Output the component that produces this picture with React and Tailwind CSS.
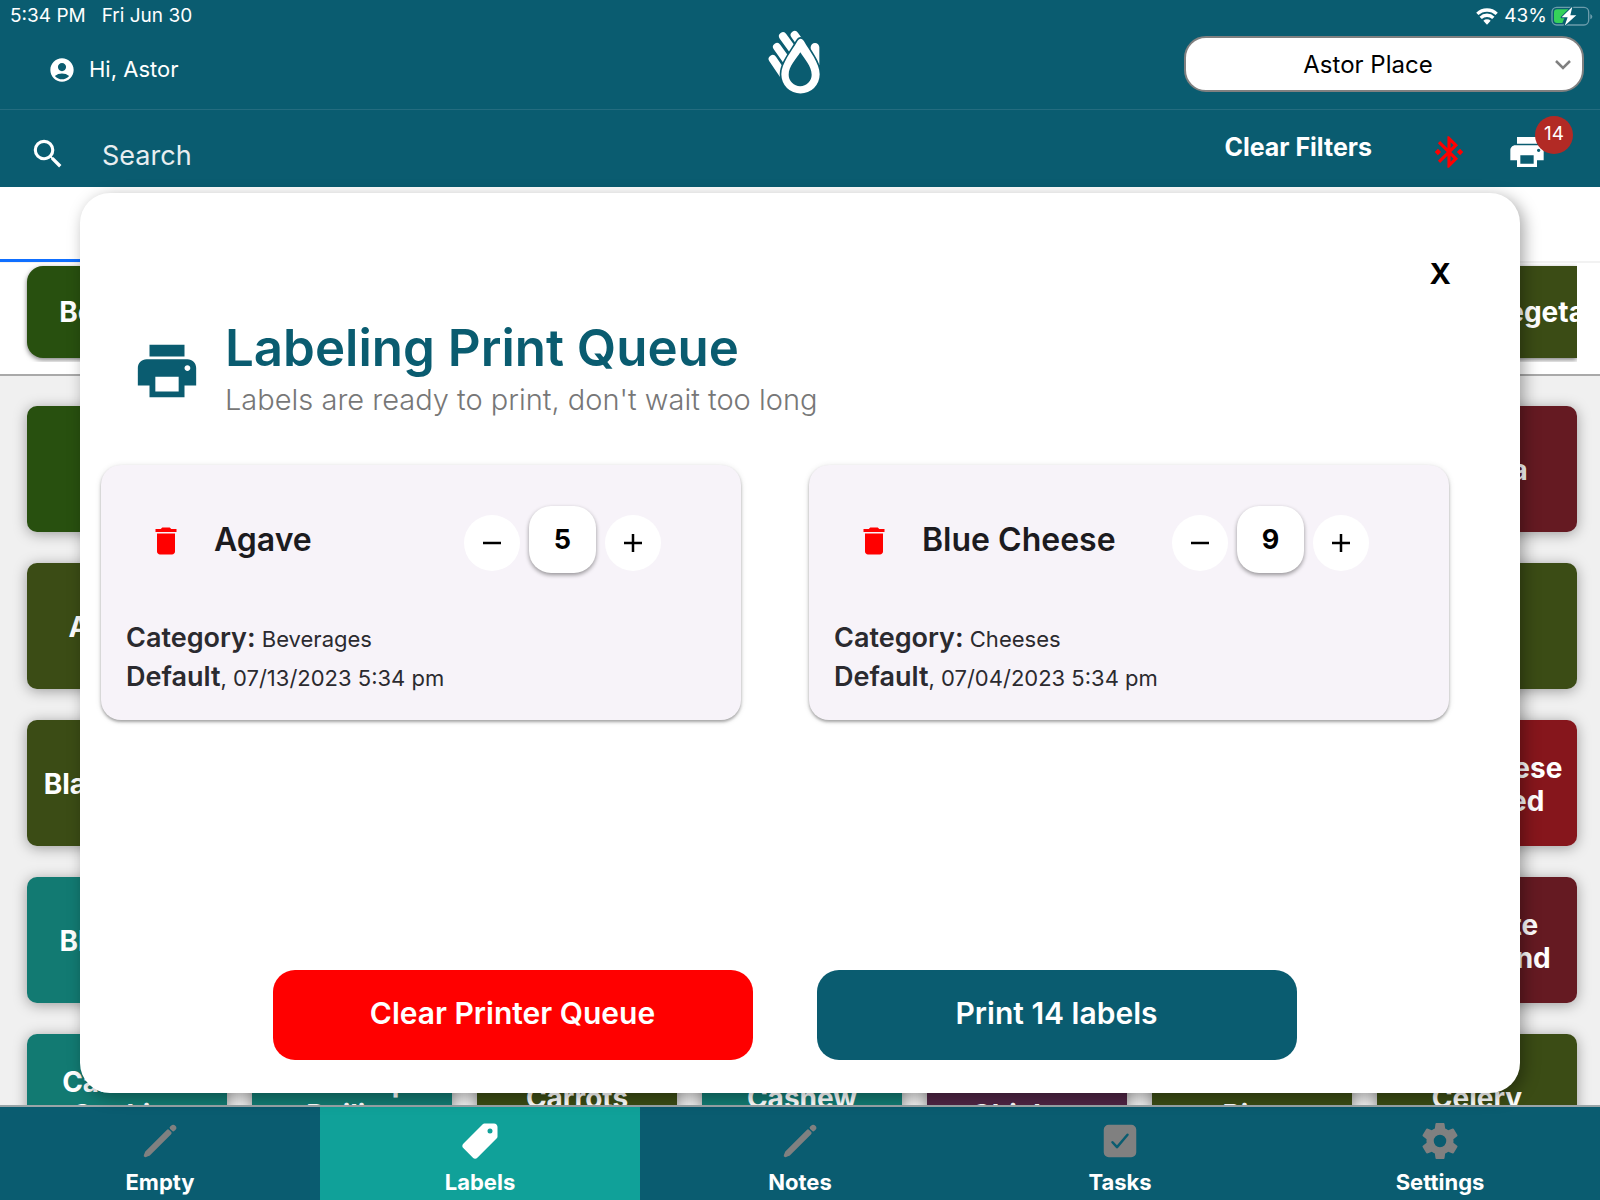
import React from 'react';
import { MdAccountCircle, MdSearch, MdPrint, MdDelete } from 'react-icons/md';
import { IoPencil, IoPricetag, IoCheckbox, IoSettingsSharp } from 'react-icons/io5';

const GREEN = 'bg-[#28500f]';
const OLIVE = 'bg-[#3b4c15]';
const TEAL = 'bg-[#127a72]';
const MAROON = 'bg-[#651a22]';
const RED = 'bg-[#86161c]';
const PURPLE = 'bg-[#4f2544]';

const tiles = [
  ['', GREEN], ['', OLIVE], ['', OLIVE], ['', OLIVE], ['', MAROON], ['', OLIVE], ['Burrata', MAROON],
  ['Apricots', OLIVE], ['', OLIVE], ['', OLIVE], ['', MAROON], ['', OLIVE], ['', OLIVE], ['', OLIVE],
  ['Black Beans', OLIVE], ['', TEAL], ['', TEAL], ['', RED], ['', OLIVE], ['', TEAL], ['Blue Cheese\nCrumbled', RED],
  ['Blueberry', TEAL], ['', OLIVE], ['', RED], ['', OLIVE], ['', TEAL], ['', RED], ['Baguette\nBeef Blend', MAROON],
  ['Caramels\nCookies', TEAL], ['Ketchup\nDailies', TEAL], ['Carrots', OLIVE], ['Cashew', TEAL], ['Canned\nChicken', PURPLE], ['Carrot\nRice', OLIVE], ['Celery', OLIVE],
];

const queue = [
  { name: 'Agave', count: 5, category: 'Beverages', date: '07/13/2023 5:34 pm' },
  { name: 'Blue Cheese', count: 9, category: 'Cheeses', date: '07/04/2023 5:34 pm' },
];

const navItems = [
  { label: 'Empty', Icon: IoPencil },
  { label: 'Labels', Icon: IoPricetag, active: true },
  { label: 'Notes', Icon: IoPencil },
  { label: 'Tasks', Icon: IoCheckbox },
  { label: 'Settings', Icon: IoSettingsSharp },
];

function HandDropLogo() {
  return (
    <svg viewBox="110 60 162 195" className="h-[65px] w-[54px]" aria-label="Logo" role="img">
      <g stroke="#fff" strokeWidth="24" strokeLinecap="round">
        <path d="M127 147L160 196" />
        <path d="M140 111L175 160" />
        <path d="M158 79L195 130" />
        <path d="M193 75L215 106" />
      </g>
      <path fill="#fff" d="M267 112a13 13 0 0 0-26 0c0 6-1 10-3 14l29 40z" />
      <path
        fill="#fff"
        stroke="#0a5c70"
        strokeWidth="10"
        paintOrder="stroke"
        d="M211 86c-4 0-7 3-10 8-16 28-48 66-48 99a57.500 57.500 0 0 0 115 0c0-33-31-71-47-99-3-5-6-8-10-8z"
      />
      <path fill="#0a5c70" d="M210 127c-12 19-35 42-35 67a34.500 34.500 0 0 0 69 0c0-25-22-48-34-67z" />
    </svg>
  );
}

function WifiIcon() {
  return (
    <svg viewBox="0 0 66 50" className="h-[17px] w-[22px]" fill="none" stroke="#fff" strokeWidth="10" aria-hidden="true">
      <path d="M4 17a42 42 0 0 1 58 0" />
      <path d="M14 29a27 27 0 0 1 38 0" />
      <path d="M33 50L22 38a16 16 0 0 1 22 0z" fill="#fff" stroke="none" />
    </svg>
  );
}

function BatteryIcon() {
  return (
    <svg viewBox="0 0 126 60" className="h-5 w-[42px]" aria-label="Battery charging" role="img">
      <rect x="3" y="4" width="110" height="53" rx="14" fill="none" stroke="#6c9cab" strokeWidth="4" />
      <path d="M118 24q6 3 6 8t-6 8z" fill="#6c9cab" />
      <path d="M18 10h34L34 51H18q-9 0-9-9V19q0-9 9-9z" fill="#35d15a" />
      <path
        d="M64 2L32 34h18l-9 25 35-31H58z"
        fill="#fff"
        stroke="#0a5c70"
        strokeWidth="6"
        strokeLinejoin="round"
        paintOrder="stroke"
      />
    </svg>
  );
}

function BluetoothIcon() {
  return (
    <svg viewBox="0 0 24 24" className="size-[38px]" fill="#f00" aria-hidden="true">
      <path d="M19,10L17,12L19,14L21,12M14.88,16.29L13,18.17V14.41M13,5.83L14.88,7.71L13,9.58M17.710,7.710L12,2H11V9.580L6.410,5L5,6.410L10.590,12L5,17.580L6.410,19L11,14.410V22H12L17.710,16.290L13.410,12M7,12L5,10L3,12L5,14L7,12Z" />
    </svg>
  );
}

function Header() {
  return (
    <header className="shrink-0 bg-[#0a5c70] text-white">
      <div className="grid h-[110px] grid-cols-3 border-b border-[#246c7f]">
        <div className="flex flex-col items-start">
          <div className="flex h-8 items-center gap-4 pl-[10px] text-[19px]">
            <span>5:34 PM</span>
            <span>Fri Jun 30</span>
          </div>
          <div className="flex h-[75px] items-center gap-[13px] pl-12 text-[22px]">
            <MdAccountCircle className="size-7" />
            <span>Hi, Astor</span>
          </div>
        </div>
        <div className="flex justify-center pt-[30px] pr-3">
          <HandDropLogo />
        </div>
        <div className="flex flex-col items-end">
          <div className="flex h-8 items-center pr-[7px] text-[19px]">
            <WifiIcon />
            <span className="mr-1 ml-[6px]">43%</span>
            <BatteryIcon />
          </div>
          <div className="relative mt-1 mr-4 w-[400px]">
            <select
              aria-label="Location"
              className="h-14 w-full appearance-none rounded-[22px] border-2 border-[#808080] bg-white pt-[2px] pr-9 pl-1 text-center text-[24px] text-black"
            >
              <option>Astor Place</option>
            </select>
            <svg
              viewBox="0 0 16 10"
              className="pointer-events-none absolute top-[24px] right-[13px] h-[10px] w-4"
              fill="none"
              stroke="#808080"
              strokeWidth="2.500"
              aria-hidden="true"
            >
              <path d="M1 1l7 7 7-7" />
            </svg>
          </div>
        </div>
      </div>
      <div className="flex h-[77px] items-center pr-[53px] pl-[29px]">
        <label htmlFor="search" className="mt-[10px] flex" aria-label="Search">
          <MdSearch className="size-[38px]" />
        </label>
        <input
          id="search"
          type="text"
          placeholder="Search"
          className="mt-[14px] ml-[35px] h-12 min-w-0 flex-1 bg-transparent text-[27px] outline-none placeholder:text-[#e8eef0]"
        />
        <button type="button" className="mb-[2px] text-[25px] font-bold">Clear Filters</button>
        <button type="button" aria-label="Bluetooth" className="mt-[6px] ml-[58px]">
          <BluetoothIcon />
        </button>
        <button type="button" aria-label="Print queue" className="relative mt-[6px] ml-[39px]">
          <MdPrint className="size-10" />
          <span className="absolute -top-4 left-[28px] flex size-[38px] items-center justify-center rounded-full bg-[#b22a25] text-[19px]">
            14
          </span>
        </button>
      </div>
    </header>
  );
}

function QueueCard({ name, count, category, date }) {
  return (
    <article className="flex h-[255px] flex-col justify-between rounded-[20px] bg-[#f7f3f9] pt-[41px] pr-20 pb-[23px] pl-[25px] shadow-[0_2px_3px_rgba(0,0,0,0.3),0_1px_6px_rgba(0,0,0,0.12)]">
      <div className="flex items-center">
        <button type="button" aria-label={`Remove ${name}`} className="mt-[2px] ml-[22px] text-[#f00]">
          <MdDelete className="size-9" />
        </button>
        <h2 className="ml-[30px] flex-1 text-[32px] font-semibold text-[#1c1b1f]">{name}</h2>
        <div className="flex items-center gap-[9px]">
          <button type="button" aria-label={`Fewer ${name}`} className="mt-[7px] flex size-14 items-center justify-center rounded-full bg-white">
            <svg viewBox="0 0 18 18" className="size-[18px]" stroke="#000" strokeWidth="2.500" aria-hidden="true">
              <path d="M0 9h18" />
            </svg>
          </button>
          <output className="flex size-[67px] items-center justify-center rounded-[22px] bg-white pt-[2px] text-[27px] font-bold text-black shadow-[0_2px_4px_rgba(0,0,0,0.4)]">
            {count}
          </output>
          <button type="button" aria-label={`More ${name}`} className="mt-[7px] flex size-14 items-center justify-center rounded-full bg-white">
            <svg viewBox="0 0 18 18" className="size-[18px]" stroke="#000" strokeWidth="2.500" aria-hidden="true">
              <path d="M0 9h18M9 0v18" />
            </svg>
          </button>
        </div>
      </div>
      <div className="text-[22px] leading-[37px] text-[#2b2a2f]">
        <p>
          <span className="text-[27px] font-semibold">Category:</span> {category}
        </p>
        <p>
          <span className="text-[27px] font-semibold">Default</span>, {date}
        </p>
      </div>
    </article>
  );
}

function PrintQueueDialog() {
  return (
    <section
      role="dialog"
      aria-labelledby="queue-title"
      className="absolute inset-x-[5%] top-[6px] bottom-3 flex flex-col rounded-[30px] bg-white pr-[71px] pb-[33px] pl-[21px] shadow-[4px_4px_16px_rgba(0,0,0,0.35)]"
    >
      <button type="button" aria-label="Close" className="mt-[61px] mr-[-2px] self-end text-[29px] leading-10 font-bold text-black">
        X
      </button>
      <div className="mt-6 flex items-center gap-[23px] pl-[31px] text-[#0a5c70]">
        <MdPrint className="mt-1 size-[70px]" />
        <div>
          <h1 id="queue-title" className="text-[51px] leading-[59px] font-semibold">Labeling Print Queue</h1>
          <p className="pt-[2px] text-[29px] leading-[41px] font-[350] text-[#777]">Labels are ready to print, don't wait too long</p>
        </div>
      </div>
      <div className="mt-[45px] grid grid-cols-2 gap-[68px]">
        {queue.map((item) => (
          <QueueCard key={item.name} {...item} />
        ))}
      </div>
      <div className="mt-auto flex justify-center gap-16 pl-[19px] text-[30px] font-semibold text-white">
        <button type="button" className="h-[90px] w-[480px] rounded-[22px] bg-[#f00] pb-1">Clear Printer Queue</button>
        <button type="button" className="h-[90px] w-[480px] rounded-[22px] bg-[#0a5c70] pb-1">Print 14 labels</button>
      </div>
    </section>
  );
}

function Background() {
  return (
    <div className="flex h-full flex-col text-[28px] font-bold text-white">
      <div className="h-[76px] shrink-0 border-b-2 border-[#f2f2f2]">
        <div className="h-[75px] w-1/5 border-b-3 border-[#0f6fff]" />
      </div>
      <div className="h-[113px] shrink-0 border-b-2 border-[#a9a9a9] pr-[23px]">
        <div className="flex justify-between overflow-hidden pt-[3px] pb-1 pl-[27px]">
          <div className="flex h-[92px] w-[200px] shrink-0 items-center justify-center rounded-[16px] bg-[#28500f] pr-[6px] shadow-[0_2px_5px_rgba(0,0,0,0.5)]">Beverage</div>
          <div className="flex h-[92px] w-[131px] shrink-0 items-center overflow-hidden rounded-l-[16px] bg-[#3b4c15] pl-[42px] shadow-[0_2px_5px_rgba(0,0,0,0.5)]">Vegetables</div>
        </div>
      </div>
      <div className="grid min-h-0 flex-1 auto-rows-[126px] grid-cols-7 gap-x-[25px] gap-y-[31px] overflow-hidden bg-[#f0f0f0] pt-[30px] pr-[23px] pl-[27px]">
        {tiles.map(([label, color], i) => (
          <div
            key={i}
            className={`${color} flex items-center justify-center rounded-[10px] pt-[3px] text-center leading-[33px] whitespace-pre shadow-[0_2px_14px_rgba(0,0,0,0.35)]`}
          >
            {label}
          </div>
        ))}
      </div>
    </div>
  );
}

function BottomNav() {
  return (
    <nav className="grid h-[95px] shrink-0 grid-cols-5 border-t-2 border-[#9aa5a8] bg-[#0a5c70]">
      {navItems.map(({ label, Icon, active }) => (
        <a
          key={label}
          href={`#${label.toLowerCase()}`}
          className={`flex flex-col items-center pt-[14px] text-[22px] leading-8 font-bold text-white ${active ? 'bg-[#10a199]' : ''}`}
        >
          <Icon className={`mb-[5px] size-10 ${active ? 'text-white' : 'text-[#808080]'}`} />
          {label}
        </a>
      ))}
    </nav>
  );
}

export default function App() {
  return (
    <div className="flex h-screen flex-col overflow-hidden bg-white font-['Inter','Liberation_Sans',sans-serif]">
      <Header />
      <main className="relative min-h-0 flex-1">
        <Background />
        <PrintQueueDialog />
      </main>
      <BottomNav />
    </div>
  );
}
